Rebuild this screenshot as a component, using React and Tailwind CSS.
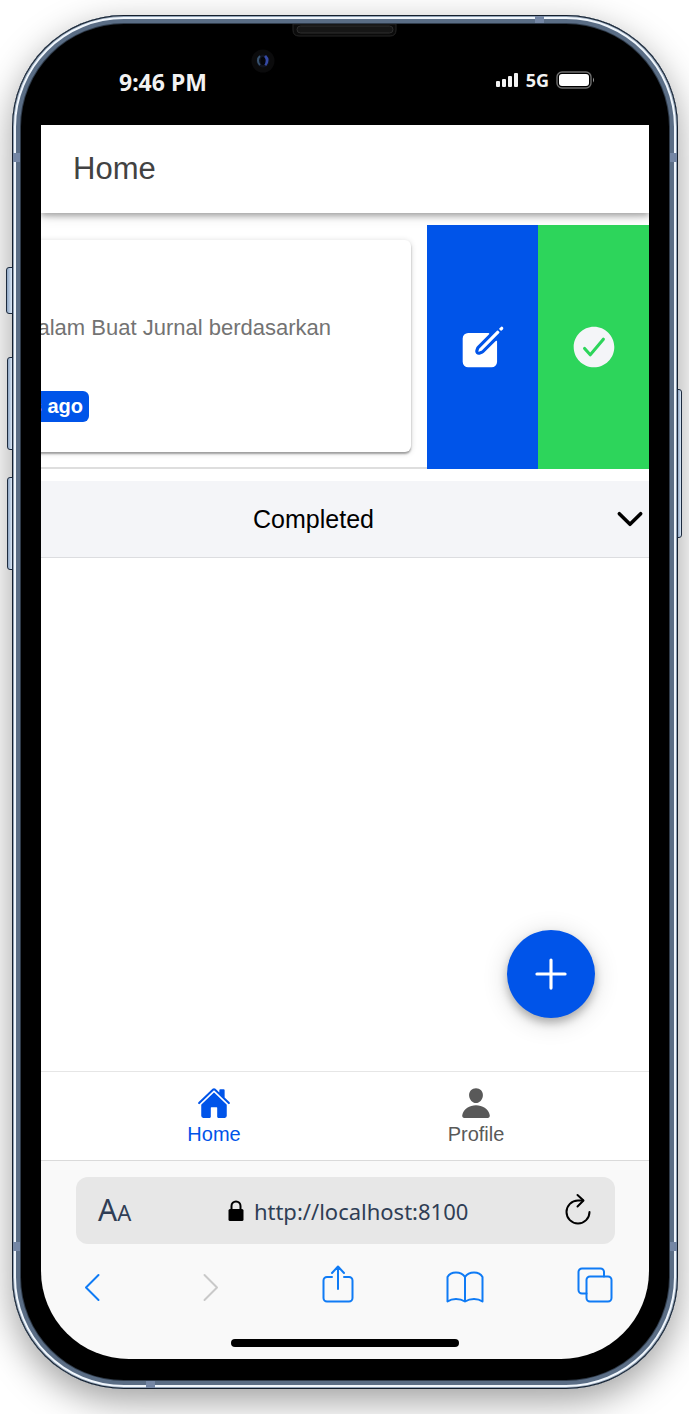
import {
  IoAdd,
  IoCheckmarkCircle,
  IoChevronDown,
  IoCreate,
  IoHome,
  IoPerson,
} from "react-icons/io5";

function DeviceButtons() {
  const side =
    "absolute border border-[#1d2b3f] bg-linear-to-r from-[#8ea6c4] to-[#dbe7f5]";
  return (
    <div aria-hidden="true">
      <span className={`${side} -left-[6px] top-[252px] h-[47px] w-[7px] rounded-l-[3px]`} />
      <span className={`${side} -left-[5px] top-[342px] h-[93px] w-[6px] rounded-l-[3px]`} />
      <span className={`${side} -left-[5px] top-[462px] h-[93px] w-[6px] rounded-l-[3px]`} />
      <span className={`${side} -right-[4px] top-[374px] h-[149px] w-[5px] rounded-r-[3px]`} />
    </div>
  );
}

function AntennaBands() {
  const band = "absolute bg-[#7587a5]";
  return (
    <div aria-hidden="true">
      <span className={`${band} left-px top-[138px] h-[9px] w-[7px]`} />
      <span className={`${band} right-px top-[138px] h-[9px] w-[7px]`} />
      <span className={`${band} bottom-[138px] left-px h-[9px] w-[7px]`} />
      <span className={`${band} bottom-[138px] right-px h-[9px] w-[7px]`} />
      <span className={`${band} right-[134px] top-px h-[7px] w-[9px]`} />
      <span className={`${band} bottom-px left-[134px] h-[7px] w-[9px]`} />
    </div>
  );
}

function SpeakerAndCamera() {
  return (
    <svg
      className="absolute left-1/2 top-[9px] -translate-x-1/2"
      width="200"
      height="52"
      viewBox="0 0 200 52"
      aria-hidden="true"
    >
      <path d="M48 0v6q0 6 6 6h91q6 0 6-6V0z" fill="#0b0b0b" stroke="#242424" />
      <rect x="52" y="2" width="96" height="7" rx="3.5" fill="#161616" stroke="#2e2e2e" />
      <circle cx="18" cy="37" r="11.5" fill="#0b0b0c" />
      <circle cx="18" cy="37" r="6.5" fill="#11141f" />
      <path d="M15 32a6 6 0 0 0 0 9" stroke="#38536f" strokeWidth="2" fill="none" />
      <path d="M20 32q4 4 0 9" stroke="#3549a5" strokeWidth="3" fill="none" />
      <ellipse cx="18" cy="37" rx="2.5" ry="4" fill="#04050a" />
    </svg>
  );
}

function StatusBar() {
  return (
    <div className="flex h-[110px] items-center justify-between pl-[107px] pr-[83px] pt-[24px] font-['Noto_Sans','Open_Sans',sans-serif] text-[#f2f2f2]">
      <time className="text-[23px] font-bold leading-[30px]">9:46 PM</time>
      <div className="-mt-1 flex items-center gap-[7px]">
        <svg width="23" height="16" viewBox="0 0 23 16" fill="#f2f2f2" aria-hidden="true">
          <rect x="0" y="9" width="4" height="6" rx="1" />
          <rect x="6" y="7" width="4" height="8" rx="1" />
          <rect x="12" y="4" width="4" height="11" rx="1" />
          <rect x="18" y="1" width="4" height="14" rx="1" />
        </svg>
        <span className="text-[18px] font-bold leading-6">5G</span>
        <svg width="39" height="18" viewBox="0 0 39 18" aria-hidden="true">
          <rect x="1" y="1" width="34" height="16" rx="5" fill="none" stroke="#6e6e6e" strokeWidth="1.4" />
          <rect x="3" y="3" width="30" height="12" rx="3" fill="#fff" />
          <path d="M37 6.500q2 2.500 0 5z" fill="#9a9a9a" />
        </svg>
      </div>
    </div>
  );
}

function TaskItem() {
  return (
    <section className="mt-3 flex h-[244px] justify-end overflow-hidden">
      <div className="flex min-w-0 flex-1 justify-end overflow-hidden border-b-2 border-[#dedede] pb-[15px] pr-4 pt-[15px]">
        <article className="flex w-[576px] shrink-0 flex-col items-end rounded-md bg-white pt-[74px] shadow-[0_2px_2px_rgba(0,0,0,0.32),0_1px_6px_rgba(0,0,0,0.16)]">
          <p className="mr-20 whitespace-nowrap text-[22px] leading-7 text-[#737373]">
            dalam Buat Jurnal berdasarkan
          </p>
          <span className="mr-[322px] mt-[49px] whitespace-nowrap rounded-md bg-[#0054e9] px-[6px] text-[20px] font-bold leading-[31px] text-white">
            s ago
          </span>
        </article>
      </div>
      <button
        type="button"
        aria-label="Edit"
        className="flex w-[111px] shrink-0 items-center justify-center bg-[#0054e9] text-white"
      >
        <IoCreate size={50} />
      </button>
      <button
        type="button"
        aria-label="Complete"
        className="flex w-[111px] shrink-0 items-center justify-center bg-[#2dd55b] text-[#f4f5f8]"
      >
        <IoCheckmarkCircle size={50} />
      </button>
    </section>
  );
}

function AppScreen() {
  return (
    <div className="relative flex flex-1 flex-col bg-white">
      <header className="z-10 flex h-[88px] items-center bg-white px-8 shadow-[0_3px_6px_rgba(0,0,0,0.3),0_2px_14px_rgba(0,0,0,0.12)]">
        <h1 className="text-[31px] leading-10 text-[#424242]">Home</h1>
      </header>
      <main className="flex flex-1 flex-col">
        <TaskItem />
        <button
          type="button"
          aria-expanded="false"
          className="mt-3 flex h-[77px] items-center gap-[25px] border-b border-[#dcdde0] bg-[#f4f5f8] text-black"
        >
          <span className="flex-1 text-center text-[25px] leading-8">Completed</span>
          <IoChevronDown size={38} />
        </button>
      </main>
      <button
        type="button"
        aria-label="Add"
        className="absolute bottom-[143px] right-[54px] flex size-[88px] items-center justify-center rounded-full bg-[#0054e9] text-white shadow-[0_5px_8px_rgba(0,0,0,0.25),0_4px_26px_rgba(0,0,0,0.16)]"
      >
        <IoAdd size={50} />
      </button>
      <nav className="flex h-[90px] justify-center border-b border-t border-b-[#dadada] border-t-[#e6e6e6] text-[20px] leading-6">
        <a href="#home" className="flex w-[262px] flex-col items-center gap-[2px] pt-[14px] text-[#0054e9]">
          <IoHome size={34} />
          Home
        </a>
        <a href="#profile" className="flex w-[262px] flex-col items-center gap-[2px] pt-[14px] text-[#595959]">
          <IoPerson size={34} />
          Profile
        </a>
      </nav>
    </div>
  );
}

const toolButtons = [
  {
    label: "Back",
    width: 16,
    height: 30,
    body: <path d="M14.500 2 2 14.500 14.500 27" />,
  },
  {
    label: "Forward",
    width: 16,
    height: 30,
    muted: true,
    body: <path d="M1.500 2 14 14.500 1.500 27" />,
  },
  {
    label: "Share",
    width: 32,
    height: 38,
    body: (
      <>
        <path d="M10 12H5a3.500 3.500 0 0 0-3.500 3.500V33A3.500 3.500 0 0 0 5 36.500h22a3.500 3.500 0 0 0 3.500-3.500V15.500A3.500 3.500 0 0 0 27 12h-5" />
        <path d="M16 24V2M10 8l6-6.500L22 8" />
      </>
    ),
  },
  {
    label: "Bookmarks",
    width: 38,
    height: 32,
    body: (
      <path d="M1.500 30.500V6Q4 1.500 10 1.500T19 6Q22 1.500 28 1.500T36.500 6v24.500Q33 28 28 28t-9 2.500Q15 28 10 28t-8.500 2.500zM19 6v24.500" />
    ),
  },
  {
    label: "Tabs",
    width: 36,
    height: 36,
    body: (
      <>
        <rect x="9.500" y="9.500" width="25" height="25" rx="3.500" />
        <path d="M9.500 26.500H5A3.500 3.500 0 0 1 1.500 23V5A3.500 3.500 0 0 1 5 1.500h18.500A3.500 3.500 0 0 1 27 5v4.500" />
      </>
    ),
  },
];

function BrowserBar() {
  return (
    <footer className="flex h-[198px] flex-col bg-[#f9f9f9]">
      <div className="ml-[35px] mr-[34px] mt-4 flex h-[67px] items-center rounded-xl bg-[#e7e7e7] pl-[22px] pr-6 font-['Noto_Sans','Open_Sans',sans-serif] text-[#2f3e55]">
        <button type="button" aria-label="Text size" className="flex items-baseline leading-9">
          <span className="text-[30px]">A</span>
          <span className="text-[22px]">A</span>
        </button>
        <div className="flex flex-1 items-center justify-center gap-[10px]">
          <svg width="16" height="22" viewBox="0 0 16 22" aria-hidden="true">
            <rect x="0.500" y="9" width="15" height="12" rx="1.500" fill="#000" />
            <path d="M3.500 10V6a4.500 4.500 0 0 1 9 0v4" fill="none" stroke="#000" strokeWidth="2" />
          </svg>
          <span className="text-[22px] leading-8">http://localhost:8100</span>
        </div>
        <button type="button" aria-label="Reload" className="mb-1">
          <svg
            width="26"
            height="32"
            viewBox="0 0 26 32"
            fill="none"
            stroke="#000"
            strokeWidth="2"
            strokeLinecap="round"
            strokeLinejoin="round"
          >
            <path d="M24.500 19A11.500 11.500 0 1 1 13 7.500h5" />
            <path d="M12.500 2 18.500 7.500 12.500 13.500" />
          </svg>
        </button>
      </div>
      <div className="ml-[43px] mr-[36px] mt-[19px] flex h-[41px] items-end justify-between pb-[1px]">
        {toolButtons.map((b) => (
          <button key={b.label} type="button" aria-label={b.label} className="flex min-w-[26px]">
            <svg
              className={b.muted ? "stroke-[#c9c9c9]" : "stroke-[#0f7bf5]"}
              width={b.width}
              height={b.height}
              viewBox={`0 0 ${b.width} ${b.height}`}
              fill="none"
              strokeWidth="2"
              strokeLinecap="round"
              strokeLinejoin="round"
            >
              {b.body}
            </svg>
          </button>
        ))}
      </div>
      <div className="mx-auto mb-3 mt-auto h-2 w-[228px] rounded-full bg-black" />
    </footer>
  );
}

export default function App() {
  return (
    <div className="flex min-h-screen overflow-hidden bg-white pb-[25px] pl-3 pr-[11px] pt-[15px] font-['Liberation_Sans',Arial,sans-serif]">
      <div className="relative flex min-w-0 flex-1 flex-col rounded-[112px] bg-[#e8eff7] shadow-[0_12px_36px_rgba(0,0,0,0.38)]">
        <DeviceButtons />
        <div className="flex flex-1 flex-col rounded-[112px] bg-black pb-[30px] shadow-[inset_0_0_0_1px_#141f2d,inset_0_0_0_2px_#8fa0b4,inset_0_0_0_4px_#f0f6fc,inset_0_0_0_8px_#5a6d85,inset_0_0_0_9px_#2f3b4a]">
          <StatusBar />
          <div className="ml-[29px] mr-[29px] flex flex-1 flex-col overflow-hidden rounded-b-[88px]">
            <AppScreen />
            <BrowserBar />
          </div>
        </div>
        <AntennaBands />
        <SpeakerAndCamera />
      </div>
    </div>
  );
}
